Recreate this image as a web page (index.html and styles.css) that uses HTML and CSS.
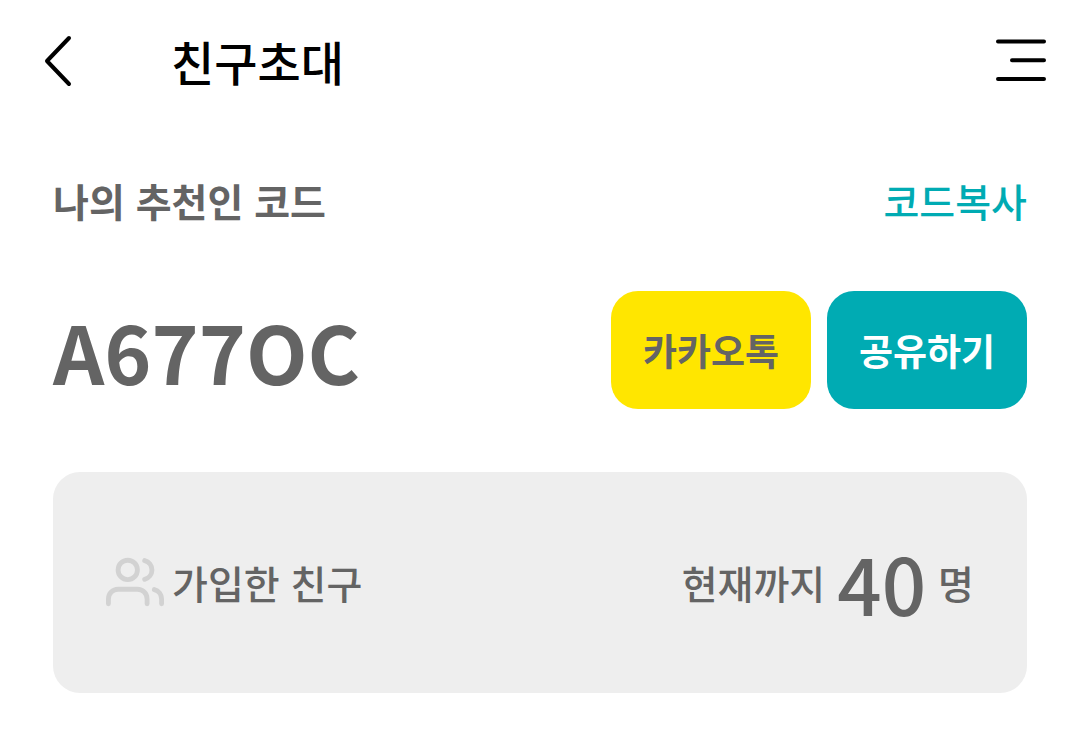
FILE: index.html
```html
<!DOCTYPE html>
<html lang="ko">
<head>
<meta charset="utf-8">
<meta name="viewport" content="width=device-width, initial-scale=1">
<title>친구초대</title>
<link rel="stylesheet" href="styles.css">
</head>
<body>
<header class="topbar">
  <button class="icon-button back" type="button" aria-label="뒤로">
    <svg width="28" height="52" viewBox="0 0 28 52" fill="none" stroke="currentColor" stroke-width="4" stroke-linecap="round" stroke-linejoin="round"><path d="M25 3 3 26l22 23"/></svg>
  </button>
  <h1 class="title">친구초대</h1>
  <button class="icon-button" type="button" aria-label="메뉴">
    <svg width="50" height="44" viewBox="0 0 50 44" fill="none" stroke="currentColor" stroke-width="4" stroke-linecap="round"><path d="M2 2.500h46M16 21.300h32M2 40h46"/></svg>
  </button>
</header>
<main class="content">
  <section class="code-heading">
    <h2 class="label">나의 추천인 코드</h2>
    <button class="copy" type="button">코드복사</button>
  </section>
  <section class="code-row">
    <strong class="code">A677OC</strong>
    <div class="actions">
      <button class="share kakao" type="button">카카오톡</button>
      <button class="share general" type="button">공유하기</button>
    </div>
  </section>
  <section class="friends">
    <div class="joined">
      <svg width="58" height="58" viewBox="0 0 24 24" fill="none" stroke="currentColor" stroke-width="2" stroke-linecap="round" stroke-linejoin="round" aria-hidden="true"><path d="M17 21v-2a4 4 0 0 0-4-4H5a4 4 0 0 0-4 4v2"/><circle cx="9" cy="7" r="4"/><path d="M23 21v-2a4 4 0 0 0-3-3.870M16 3.130a4 4 0 0 1 0 7.750"/></svg>
      <span>가입한 친구</span>
    </div>
    <p class="total"><span>현재까지</span><strong class="count">40</strong><span>명</span></p>
  </section>
</main>
</body>
</html>
```
FILE: styles.css
```css
* {
  box-sizing: border-box;
}

body {
  margin: 0;
  background: #fff;
  color: #646464;
  font-family: "Noto Sans CJK KR", sans-serif;
  font-size: 39px;
  font-weight: 500;
  line-height: 56px;
}

h1,
h2,
p {
  margin: 0;
}

button {
  border: 0;
  padding: 0;
  background: none;
  color: inherit;
  font: inherit;
  cursor: pointer;
}

svg {
  display: block;
}

.topbar {
  display: flex;
  align-items: center;
  height: 122px;
  padding: 0 34px 0 44px;
  color: #000;
}

.back {
  width: 127px;
}

.title {
  flex: 1;
  font-size: 47px;
  font-weight: 500;
}

.content {
  padding: 50px 53px 40px;
}

.code-heading,
.code-row,
.friends {
  display: flex;
  align-items: center;
  justify-content: space-between;
}

.label {
  font-size: 39px;
  font-weight: 700;
}

.copy {
  color: #00abb3;
}

.code-row {
  margin-top: 63px;
}

.code {
  font-size: 80px;
  font-weight: 700;
  line-height: 118px;
}

.actions {
  display: flex;
  gap: 16px;
}

.share {
  width: 200px;
  height: 118px;
  border-radius: 27px;
  font-size: 37px;
  font-weight: 700;
}

.kakao {
  background: #ffe600;
}

.general {
  background: #00abb3;
  color: #fff;
}

.friends {
  margin-top: 63px;
  padding: 51px 53px 52px;
  border-radius: 27px;
  background: #eee;
}

.joined {
  display: flex;
  align-items: center;
  gap: 8px;
}

.joined svg {
  color: #d2d2d2;
}

.total {
  display: flex;
  align-items: center;
  gap: 12px;
}

.count {
  font-size: 78px;
  font-weight: 500;
  line-height: 118px;
}
```
